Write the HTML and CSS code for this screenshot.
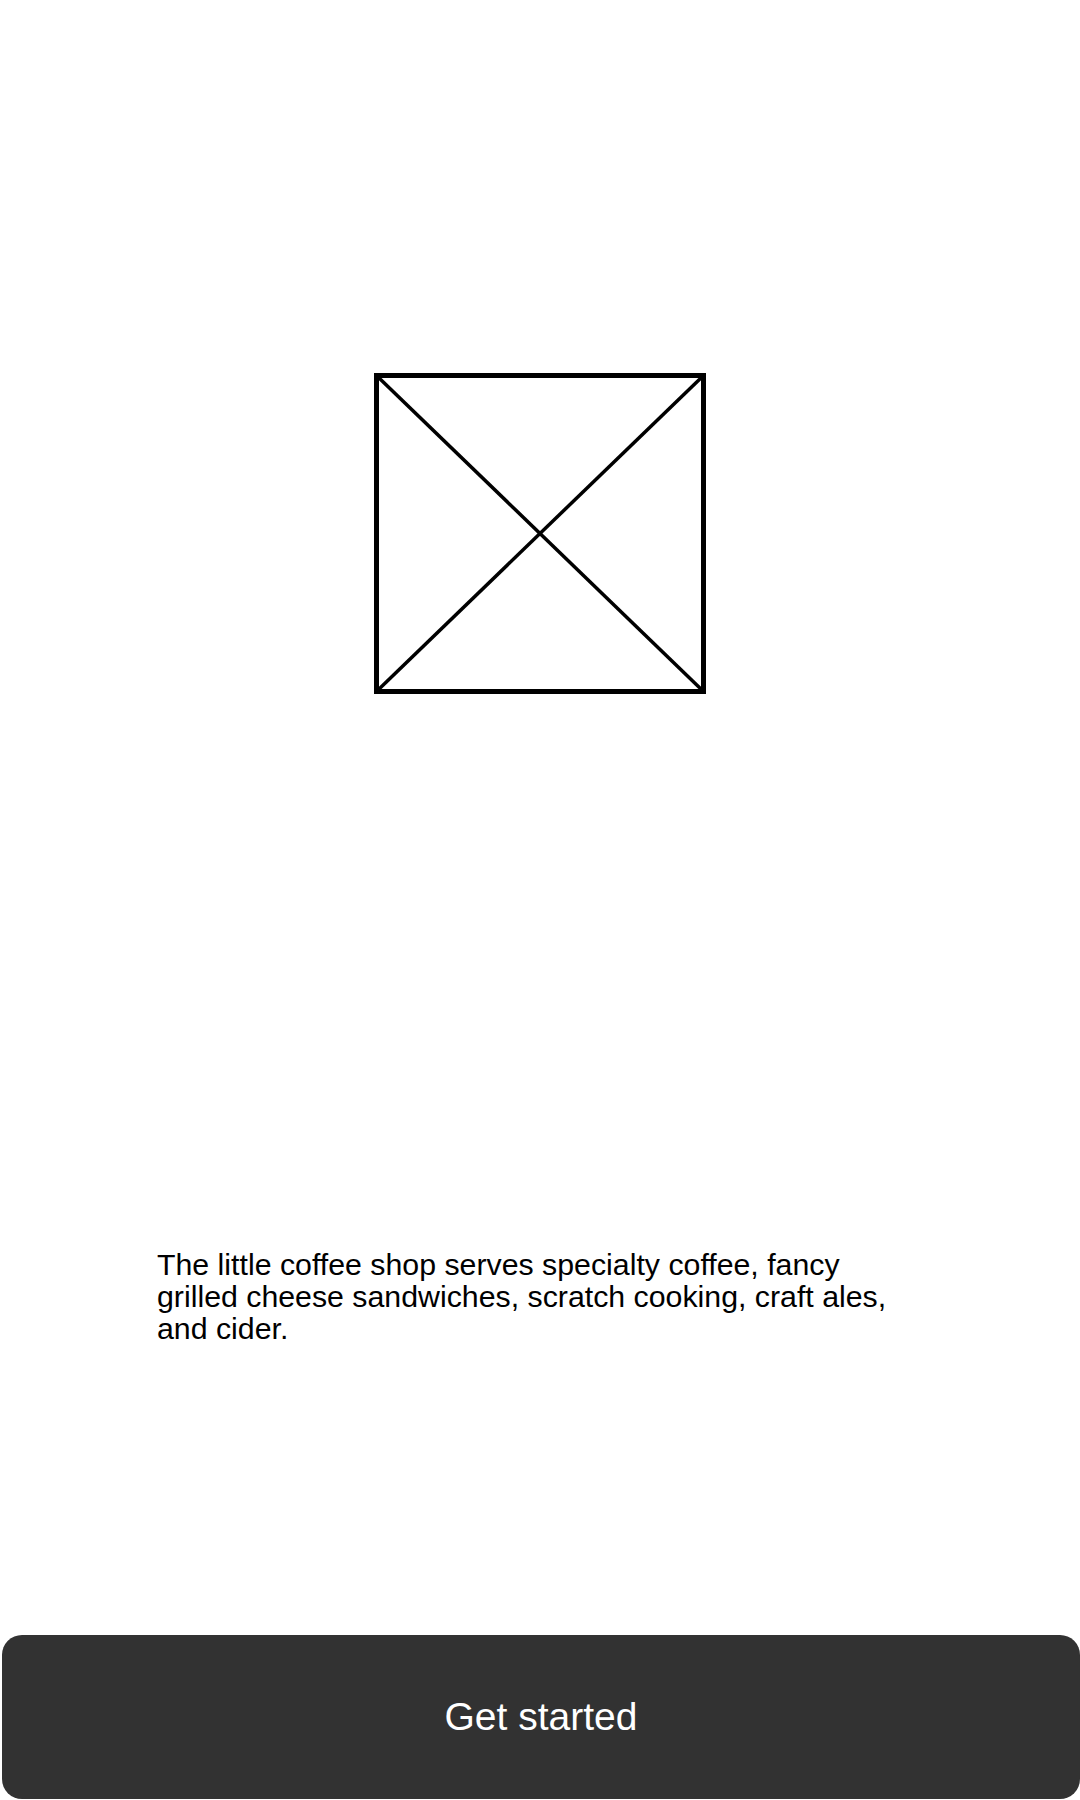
FILE: index.html
```html
<!DOCTYPE html>
<html lang="en">
<head>
<meta charset="utf-8">
<title>Coffee shop</title>
<link rel="stylesheet" href="styles.css">
</head>
<body>
<main class="screen">
  <div class="hero">
    <svg class="placeholder" width="332" height="321" viewBox="0 0 332 321" aria-hidden="true">
      <rect x="2.5" y="2.5" width="327" height="316" fill="none" stroke="#000" stroke-width="5"/>
      <line x1="3" y1="3" x2="329" y2="318" stroke="#000" stroke-width="3.5"/>
      <line x1="329" y1="3" x2="3" y2="318" stroke="#000" stroke-width="3.5"/>
    </svg>
  </div>
  <p class="intro">The little coffee shop serves specialty coffee, fancy grilled cheese sandwiches, scratch cooking, craft ales, and cider.</p>
  <button class="cta" type="button">Get started</button>
</main>
</body>
</html>
```
FILE: styles.css
```css
html, body {
  margin: 0;
  padding: 0;
  background: #fff;
}

.screen {
  width: 1080px;
  height: 1800px;
  display: flex;
  flex-direction: column;
  font-family: "Liberation Sans", Arial, sans-serif;
}

.hero {
  display: flex;
  justify-content: center;
  margin-top: 373px;
}

.placeholder {
  display: block;
}

.intro {
  margin: 555px 0 0;
  padding: 0 155px 0 157px;
  font-size: 30.3px;
  line-height: 32px;
  color: #000;
}

.cta {
  margin: auto 0 1px 2px;
  height: 164px;
  border: none;
  border-radius: 20px;
  background: #323232;
  color: #fff;
  font-family: "Liberation Sans", Arial, sans-serif;
  font-size: 39px;
  padding: 0;
  cursor: pointer;
}
```
